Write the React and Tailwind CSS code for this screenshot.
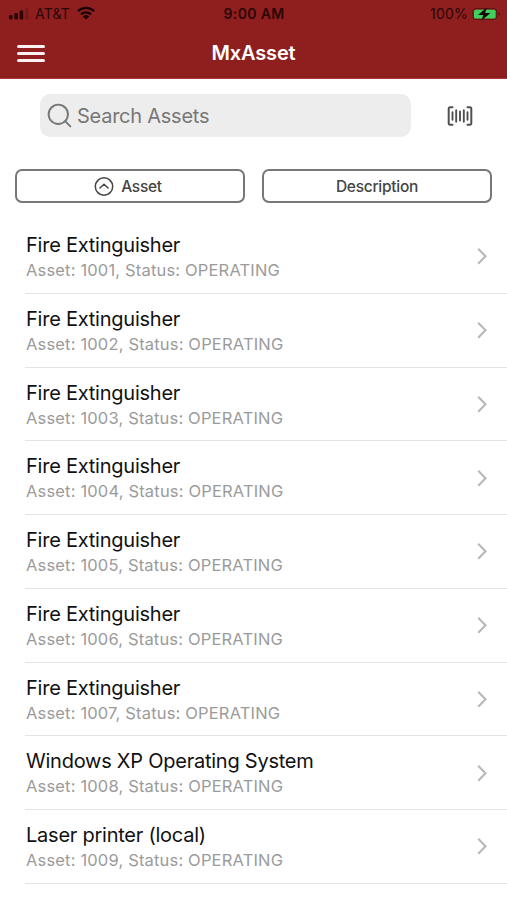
import { Search } from "lucide-react";

const assets = [
  { id: 1001, name: "Fire Extinguisher" },
  { id: 1002, name: "Fire Extinguisher" },
  { id: 1003, name: "Fire Extinguisher" },
  { id: 1004, name: "Fire Extinguisher" },
  { id: 1005, name: "Fire Extinguisher" },
  { id: 1006, name: "Fire Extinguisher" },
  { id: 1007, name: "Fire Extinguisher" },
  { id: 1008, name: "Windows XP Operating System" },
  { id: 1009, name: "Laser printer (local)" },
  { id: 1010, name: "Windows XP Operating System" },
];

function StatusBar() {
  return (
    <div className="grid grid-cols-3 items-center h-[27px] pl-[9px] pr-[6px] text-[14px] text-[#2a0606]">
      <div className="flex items-center">
        <svg width="20" height="12" viewBox="0 0 20 12" fill="currentColor">
          <rect x="0" y="7" width="3.6" height="4.5" rx="1" />
          <rect x="5.3" y="5" width="3.6" height="6.5" rx="1" />
          <rect x="10.6" y="2.5" width="3.6" height="9" rx="1" />
          <rect x="16" y="0" width="3.6" height="11.5" rx="1" opacity="0.2" />
        </svg>
        <span className="ml-[6px] w-[36px] tracking-[0.2px]">AT&T</span>
        <svg
          className="ml-[6px] -mt-px"
          width="18"
          height="14"
          viewBox="0 0 18 14"
          fill="none"
          stroke="#1a0202"
          strokeWidth="2.4"
        >
          <path d="M1 5.2a11.4 11.4 0 0 1 16 0" />
          <path d="M4 8.4a7.1 7.1 0 0 1 10 0" />
          <path d="M9 13.5 5.9 10.5a4.5 4.5 0 0 1 6.2 0Z" fill="#1a0202" stroke="none" />
        </svg>
      </div>
      <span className="pr-[2px] text-center font-semibold tracking-[0.35px]">9:00 AM</span>
      <div className="flex items-center justify-end">
        <span className="tracking-[0.2px]">100%</span>
        <svg className="ml-[4px]" width="29" height="14" viewBox="0 0 29 14">
          <rect x="0.8" y="1.5" width="24" height="11" rx="3" fill="none" stroke="#5a1512" />
          <rect x="2" y="2.7" width="21.6" height="8.8" rx="1.6" fill="#3ed15c" />
          <path d="M26.3 5v4c1.9-.6 1.9-3.4 0-4Z" fill="#5a1512" />
          <path d="M14.8.5 6 7.9h5.3L9.6 13.6l8.8-7.5h-5.3Z" fill="#160202" />
        </svg>
      </div>
    </div>
  );
}

function Header() {
  return (
    <header className="h-[79px] shrink-0 bg-[#8f1f1f] border-b border-[#a53c3c]">
      <StatusBar />
      <div className="grid grid-cols-[1fr_auto_1fr] items-center h-[52px] pl-[17px]">
        <button className="flex flex-col gap-[4px] w-[28px]" aria-label="Menu">
          <span className="h-[3px] w-full rounded-full bg-[#fdf0f0]" />
          <span className="h-[3px] w-full rounded-full bg-[#fdf0f0]" />
          <span className="h-[3px] w-full rounded-full bg-[#fdf0f0]" />
        </button>
        <h1 className="pr-[17px] text-[20px] font-semibold tracking-[-0.15px] text-white">
          MxAsset
        </h1>
      </div>
    </header>
  );
}

function BarcodeIcon() {
  return (
    <svg
      width="26"
      height="20"
      viewBox="0 0 26 20"
      fill="none"
      stroke="#505050"
      strokeWidth="2"
      strokeLinecap="round"
    >
      <path d="M5.5 1.3H3.2Q1.7 1.3 1.7 2.9v14.2q0 1.6 1.5 1.6h2.3" />
      <path d="M20.5 1.3h2.3q1.5 0 1.5 1.6v14.2q0 1.6-1.5 1.6h-2.3" />
      <path
        d="M5.5 6.3v7.4M9.2 4.3v11.4M13 5.5v9M16.8 4.3v11.4M20.5 6.3v7.4"
        strokeWidth="1.9"
      />
    </svg>
  );
}

function SearchRow() {
  return (
    <div className="flex items-center pt-[15px] pl-10 pr-[34px]">
      <div className="flex items-center w-[371px] h-[43px] pl-[5px] rounded-[10px] bg-[#ededed] text-[#777]">
        <Search size={29} strokeWidth={1.6} />
        <span className="ml-[3px] text-[20px] tracking-[-0.25px]">Search Assets</span>
      </div>
      <div className="ml-auto">
        <BarcodeIcon />
      </div>
    </div>
  );
}

function SortButtons() {
  const button =
    "flex flex-1 items-center justify-center h-[34px] rounded-[7px] border-2 border-[#777] text-[15.5px] font-medium tracking-[-0.27px] text-[#444]";
  return (
    <div className="flex gap-[17px] mt-8 px-[15px]">
      <button className={button}>
        <svg
          className="mr-[7px]"
          width="20"
          height="20"
          viewBox="0 0 20 20"
          fill="none"
          stroke="currentColor"
          strokeWidth="1.5"
          strokeLinecap="round"
          strokeLinejoin="round"
        >
          <circle cx="10" cy="10.5" r="8.7" />
          <path d="m5.9 12 4.1-3.7 4.1 3.7" />
        </svg>
        <span className="pt-px pr-[4px]">Asset</span>
      </button>
      <button className={button}>
        <span className="pt-px">Description</span>
      </button>
    </div>
  );
}

function AssetRow({ asset }) {
  return (
    <li className="flex items-center h-[73.75px] shrink-0 ml-[25px] pl-px pr-[19px] border-b border-[#e4e4e4]">
      <div className="flex-1 whitespace-nowrap pt-[0.5px]">
        <p className="text-[20px] leading-[28px] tracking-[-0.24px] text-[#111]">{asset.name}</p>
        <p className="text-[16.5px] leading-[23px] tracking-[0.17px] text-[#9b9b9b]">
          Asset: {asset.id}, Status: OPERATING
        </p>
      </div>
      <svg
        width="12"
        height="18"
        viewBox="0 0 12 18"
        fill="none"
        stroke="#b8b8b8"
        strokeWidth="2.1"
      >
        <path d="m2.2 1.7 7.3 7.5-7.3 7.5" />
      </svg>
    </li>
  );
}

export default function App() {
  return (
    <div className="flex flex-col h-[900px] overflow-hidden bg-white font-['Inter',sans-serif]">
      <Header />
      <SearchRow />
      <SortButtons />
      <ul className="mt-[17px]">
        {assets.map((asset) => (
          <AssetRow key={asset.id} asset={asset} />
        ))}
      </ul>
    </div>
  );
}
